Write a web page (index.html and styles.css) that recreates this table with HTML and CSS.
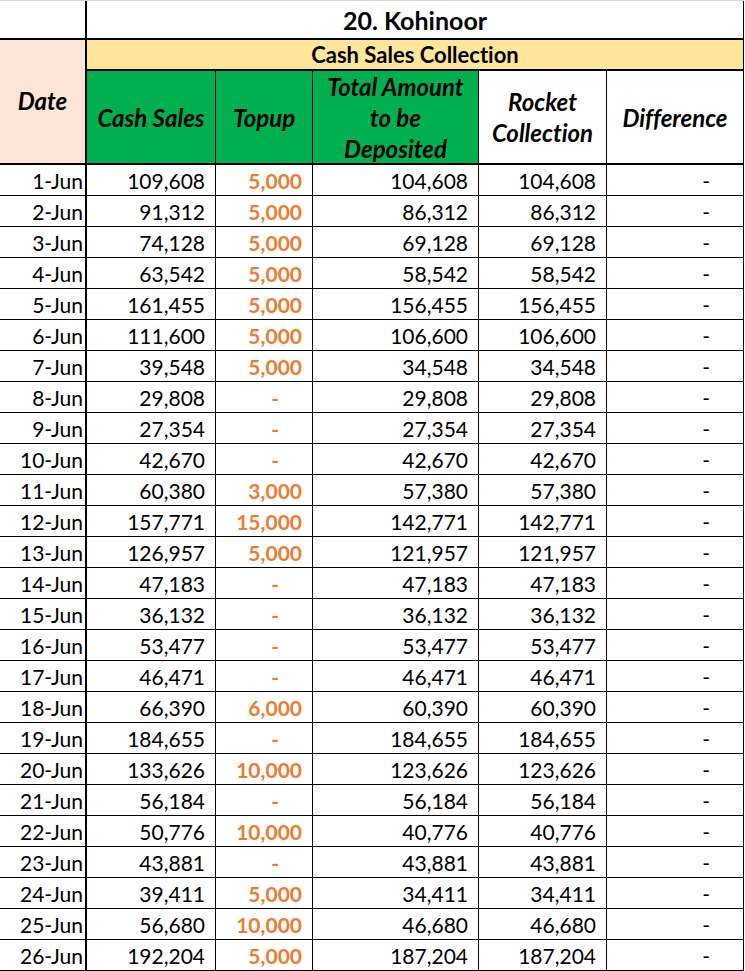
FILE: index.html
```html
<!DOCTYPE html>
<html lang="en">
<head>
<meta charset="utf-8">
<title>20. Kohinoor – Cash Sales Collection</title>
<link rel="stylesheet" href="styles.css">
</head>
<body>
<div class="sheet">
  <div class="cell blank"></div>
  <div class="cell title">20. Kohinoor</div>

  <div class="cell date-head">Date</div>
  <div class="cell group-head">Cash Sales Collection</div>

  <div class="cell head green">Cash Sales</div>
  <div class="cell head green">Topup</div>
  <div class="cell head green">Total Amount<br>to be<br>Deposited</div>
  <div class="cell head">Rocket<br>Collection</div>
  <div class="cell head">Difference</div>
</div>
<script src="rows.js"></script>
</body>
</html>
```

FILE: rows.js
```js
(function () {
  var data = [
    ["1-Jun", "109,608", "5,000", "104,608"],
    ["2-Jun", "91,312", "5,000", "86,312"],
    ["3-Jun", "74,128", "5,000", "69,128"],
    ["4-Jun", "63,542", "5,000", "58,542"],
    ["5-Jun", "161,455", "5,000", "156,455"],
    ["6-Jun", "111,600", "5,000", "106,600"],
    ["7-Jun", "39,548", "5,000", "34,548"],
    ["8-Jun", "29,808", "-", "29,808"],
    ["9-Jun", "27,354", "-", "27,354"],
    ["10-Jun", "42,670", "-", "42,670"],
    ["11-Jun", "60,380", "3,000", "57,380"],
    ["12-Jun", "157,771", "15,000", "142,771"],
    ["13-Jun", "126,957", "5,000", "121,957"],
    ["14-Jun", "47,183", "-", "47,183"],
    ["15-Jun", "36,132", "-", "36,132"],
    ["16-Jun", "53,477", "-", "53,477"],
    ["17-Jun", "46,471", "-", "46,471"],
    ["18-Jun", "66,390", "6,000", "60,390"],
    ["19-Jun", "184,655", "-", "184,655"],
    ["20-Jun", "133,626", "10,000", "123,626"],
    ["21-Jun", "56,184", "-", "56,184"],
    ["22-Jun", "50,776", "10,000", "40,776"],
    ["23-Jun", "43,881", "-", "43,881"],
    ["24-Jun", "39,411", "5,000", "34,411"],
    ["25-Jun", "56,680", "10,000", "46,680"],
    ["26-Jun", "192,204", "5,000", "187,204"]
  ];
  var sheet = document.querySelector(".sheet");
  function add(cls, text) {
    var d = document.createElement("div");
    d.className = "cell " + cls;
    d.textContent = text;
    sheet.appendChild(d);
  }
  data.forEach(function (r) {
    add("d-date", r[0]);
    add("num", r[1]);
    add(r[2] === "-" ? "topup dash" : "topup num", r[2]);
    add("num", r[3]);
    add("num", r[3]);
    add("dash", "-");
  });
})();
```

FILE: styles.css
```css
html, body {
  margin: 0;
  padding: 0;
  background: #ffffff;
}

body {
  font-family: "Lato", "Carlito", "Liberation Sans", sans-serif;
  font-variant-ligatures: none;
  color: #000000;
}

.sheet {
  display: grid;
  grid-template-columns: 87px 129px 97px 166px 128px 137px;
  grid-template-rows: 39px 31px 94px repeat(26, 31px);
  width: 744px;
  border-top: 1px solid #d6d6d6;
}

.cell {
  box-sizing: border-box;
  border-right: 1px solid #000;
  border-bottom: 1px solid #000;
  display: flex;
  align-items: center;
  font-size: 21px;
  white-space: nowrap;
  overflow: hidden;
}

.blank {
  border-right: 2px solid #000;
  border-bottom: 2px solid #000;
}

.title {
  grid-column: 2 / span 5;
  justify-content: center;
  font-weight: 700;
  font-size: 25px;
  border-bottom: 2px solid #000;
}

.date-head {
  grid-row: 2 / span 2;
  background: #fce4d6;
  justify-content: center;
  font-weight: 700;
  font-style: italic;
  font-size: 24px;
  border-right: 2px solid #000;
  border-bottom: 2px solid #000;
  padding-bottom: 2px;
}

.group-head {
  grid-column: 2 / span 5;
  background: #ffe699;
  justify-content: center;
  font-weight: 700;
  font-size: 22px;
  border-bottom: 2px solid #000;
}

.head {
  justify-content: center;
  text-align: center;
  font-weight: 700;
  font-style: italic;
  font-size: 24px;
  line-height: 31px;
  border-bottom: 2px solid #000;
}

.green {
  background: #00b050;
}

.d-date {
  justify-content: flex-end;
  padding-right: 2px;
  border-right: 2px solid #000;
}

.num {
  justify-content: flex-end;
  padding-right: 10px;
}

.dash {
  justify-content: flex-end;
  padding-right: 33px;
}

.topup {
  color: #ed7d31;
  font-weight: 700;
}
```
